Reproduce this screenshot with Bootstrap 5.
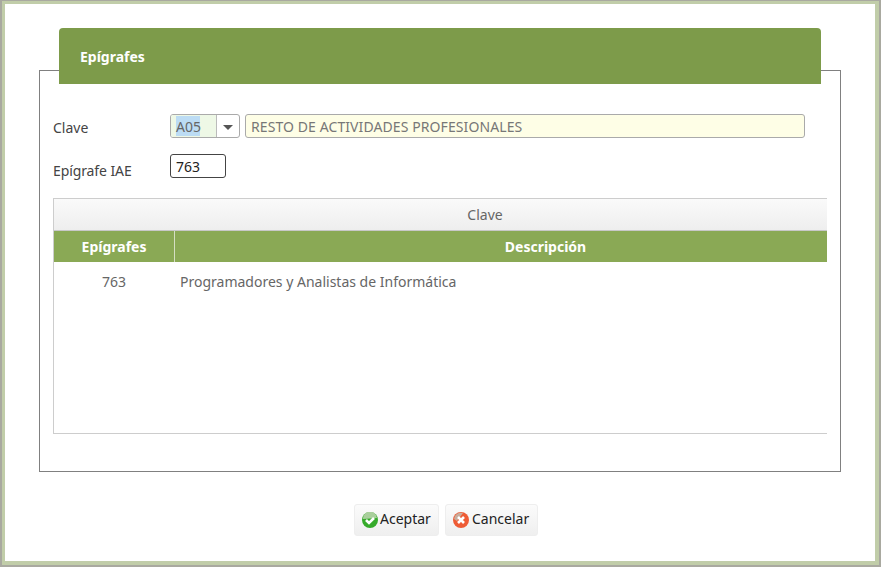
<!DOCTYPE html>
<html lang="es">
<head>
<meta charset="utf-8">
<title>Epígrafes</title>
<link href="https://cdn.jsdelivr.net/npm/bootstrap@5.3.0/dist/css/bootstrap.min.css" rel="stylesheet">
<style>
html,body{height:100%;overflow:hidden;background:#fff}
body{font-family:"Noto Sans","Open Sans",sans-serif;font-size:14px;color:#444}
.win-frame{width:881px;height:567px;border-style:solid;border-color:#a9a9a0;border-width:1px 2px 2px 2px;background:#fff}
.win-inner{height:100%;border-style:solid;border-color:#c1cda9;border-width:3px 4px 4px 3px;padding:66px 34px 0 34px}
.field-box{border:1px solid #808080;height:402px;padding:0 13px}
.title-tab{margin:-43px 6px 0 6px;height:56px;background:#7d9b4a;border-radius:4px 4px 0 0;color:#fff;font-weight:700;font-size:14px;padding:0 0 0 21px;display:flex;align-items:center}
.form-rows{padding-top:30px}
.lab{width:117px;flex:none;color:#444;height:24px}
.lab-one{line-height:28px}
.lab-two{line-height:34px;letter-spacing:-.1px}
.combo{width:70px;height:24px;border:1px solid #aaa;border-radius:3px;display:flex;overflow:hidden;background:#fff}
.combo-val{width:46px;background:#eef8e6;padding:1px 0 0 5px;color:#666;border-right:1px solid #bbb;flex:none}
.combo-val span{background:#bcdcf4;display:block;width:24px;line-height:22px;height:20px}
.combo-arrow{flex:1;display:flex;align-items:center;justify-content:center}
.combo-arrow i{display:block;width:0;height:0;border:5px solid transparent;border-top:5px solid #555;border-bottom:0;margin-top:2px}
.desc-box{width:560px;height:24px;margin-left:5px;background:#fefee6;border:1px solid #aaa;border-radius:3px;padding-left:5px;line-height:24px;color:#777;letter-spacing:.09px}
.code-box{width:56px;height:24px;border:1px solid #444;border-radius:3px;padding-left:5px;line-height:23px;color:#222;background:#fff}
.row-two{margin-top:16px}
.grid-box{margin-top:20px;height:236px;border:solid #cdcdcd;border-width:1px 0 1px 1px;color:#666;overflow:hidden}
.grid-inner{width:862px}
.grid-head{height:32px;background:linear-gradient(#fafafa,#eeeeee);border-bottom:1px solid #c8c8c8;text-align:center;line-height:32px;color:#666}
.grid-cols{height:31px;background:#8aa955;color:#fff;font-weight:700;display:flex;line-height:32px;text-align:center}
.col-a{width:120px;flex:none}
.col-b{flex:1;border-left:1px solid #d5dec3}
.grid-row{display:flex;height:38px;line-height:40px}
.col-c{width:120px;flex:none;text-align:center}
.col-d{flex:1;padding-left:6px}
.btn-row{margin-top:32px;padding-left:315px;gap:6px}
.act-btn{height:32px;background:linear-gradient(#fbfbfb,#efefef);border:1px solid #eee;border-radius:3px;display:flex;align-items:center;color:#222;padding:0 0 0 7px;gap:2px}
.act-btn svg{flex:none;margin-top:-1px}
.act-btn span{padding-bottom:3px}
.btn-ok{width:85px}
.btn-no{width:93px;gap:3px}
</style>
</head>
<body>
<div class="win-frame">
  <div class="win-inner">
    <div class="field-box">
      <div class="title-tab">Epígrafes</div>
      <div class="form-rows">
        <div class="d-flex align-items-start">
          <div class="lab lab-one">Clave</div>
          <div class="combo">
            <div class="combo-val"><span>A05</span></div>
            <div class="combo-arrow"><i></i></div>
          </div>
          <div class="desc-box">RESTO DE ACTIVIDADES PROFESIONALES</div>
        </div>
        <div class="d-flex align-items-start row-two">
          <div class="lab lab-two">Epígrafe IAE</div>
          <div class="code-box">763</div>
        </div>
      </div>
      <div class="grid-box">
        <div class="grid-inner">
          <div class="grid-head">Clave</div>
          <div class="grid-cols"><div class="col-a">Epígrafes</div><div class="col-b">Descripción</div></div>
          <div class="grid-row"><div class="col-c">763</div><div class="col-d">Programadores y Analistas de Informática</div></div>
        </div>
      </div>
    </div>
    <div class="d-flex btn-row">
      <div class="act-btn btn-ok">
        <svg width="16" height="16" viewBox="0 0 16 16"><circle cx="8" cy="8" r="8" fill="#36ab2b"/><path d="M1 7a7 7 0 0 1 14-1c-4 0-9 1-14 1z" fill="#a9cf9c"/><path d="M4 8l3 3 5-5" fill="none" stroke="#fff" stroke-width="2.6"/></svg>
        <span>Aceptar</span>
      </div>
      <div class="act-btn btn-no">
        <svg width="16" height="16" viewBox="0 0 16 16"><circle cx="8" cy="8" r="8" fill="#ee5b35"/><path d="M1 7a7 7 0 0 1 9-6L4 9z" fill="#c9ad9c"/><path d="M5 5l6 6M11 5l-6 6" stroke="#fff" stroke-width="2.6"/></svg>
        <span>Cancelar</span>
      </div>
    </div>
  </div>
</div>
</body>
</html>
